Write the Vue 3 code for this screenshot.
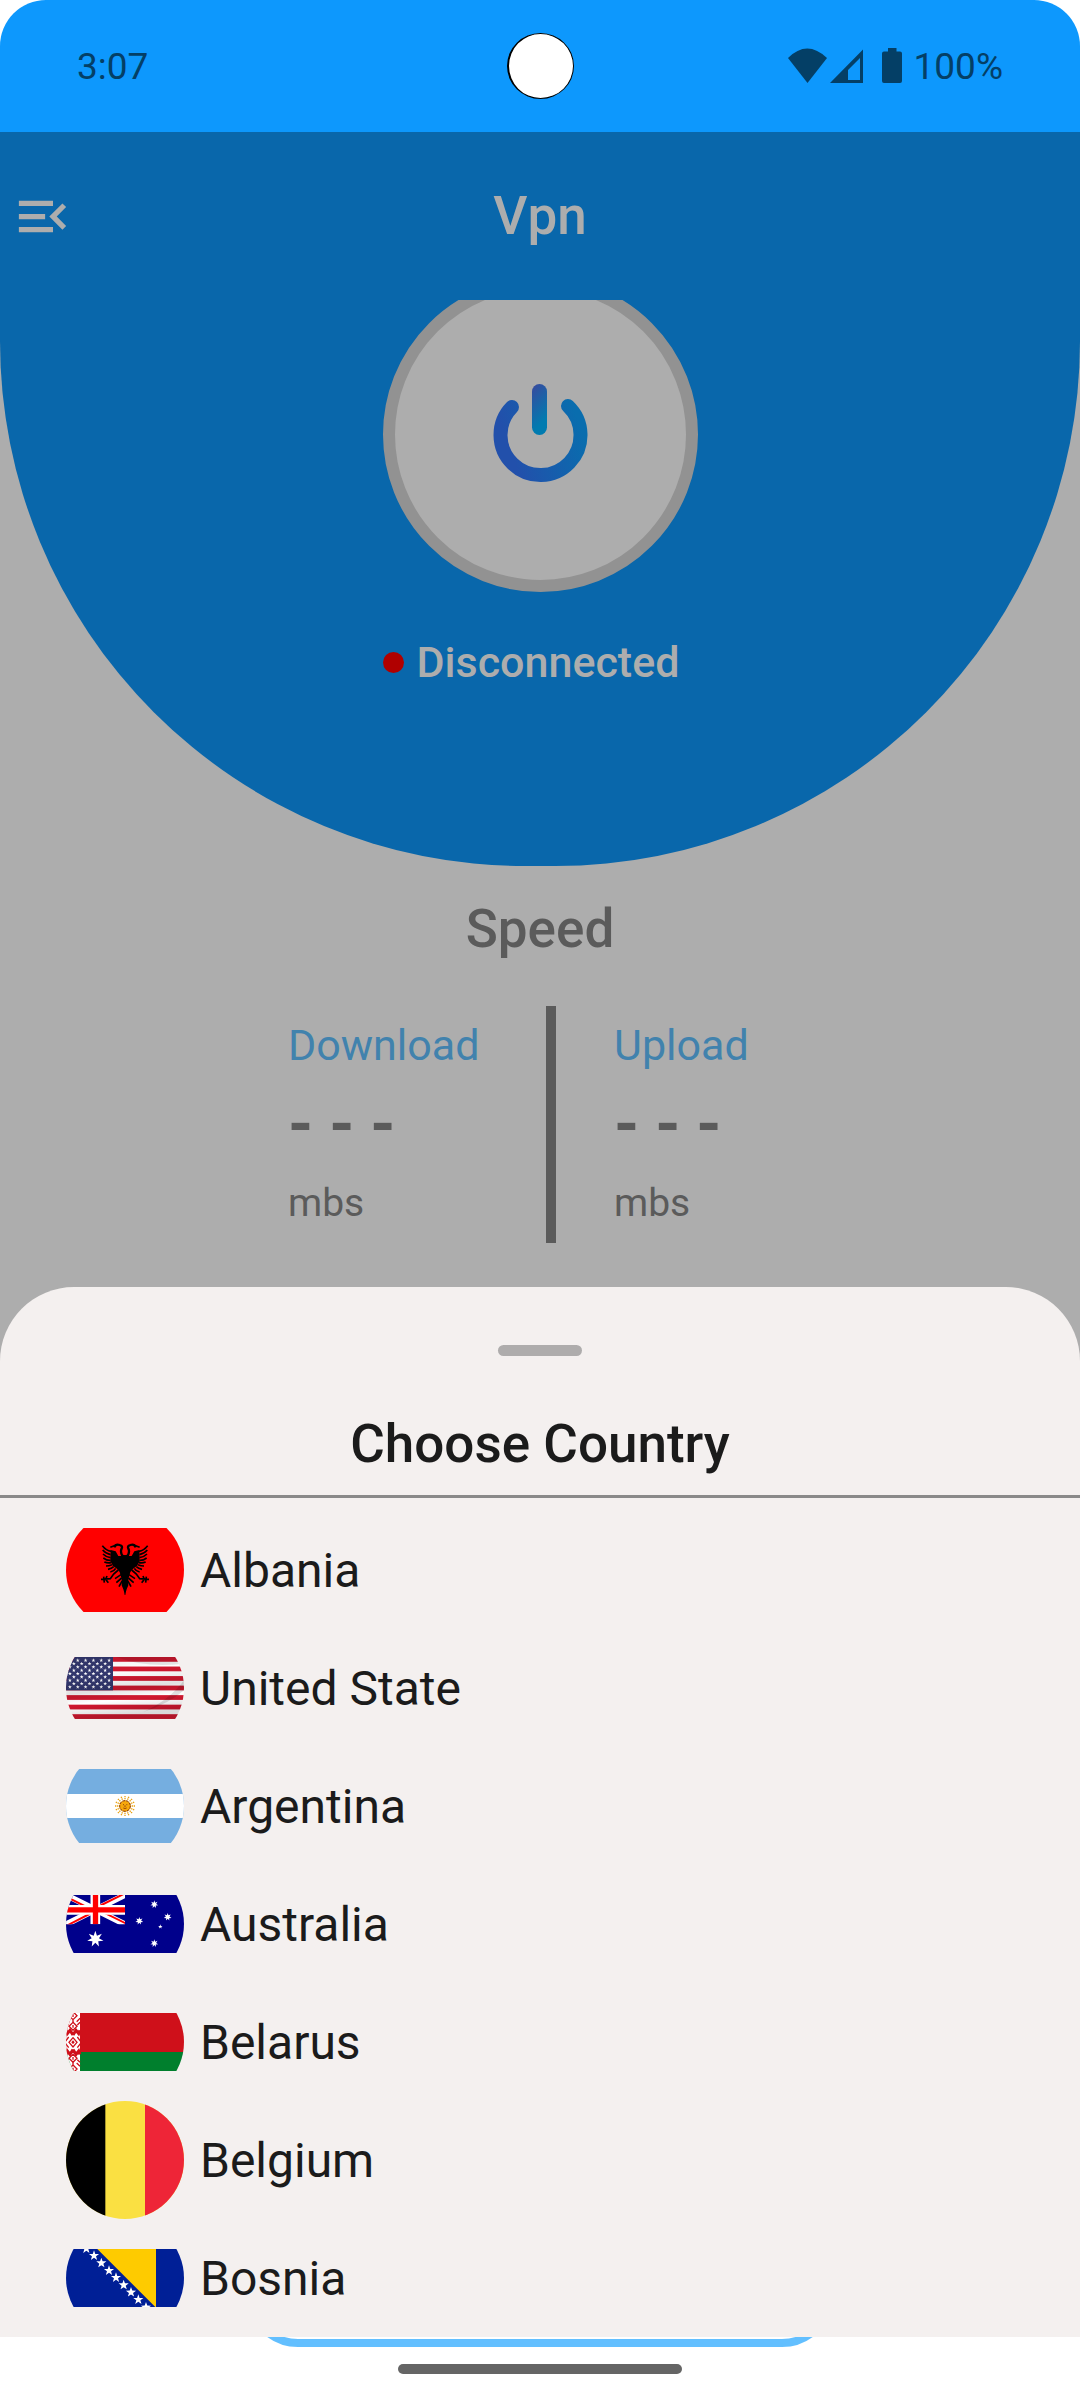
<script setup>
const countries = [
  { code: 'al', name: 'Albania' },
  { code: 'us', name: 'United State' },
  { code: 'ar', name: 'Argentina' },
  { code: 'au', name: 'Australia' },
  { code: 'by', name: 'Belarus' },
  { code: 'be', name: 'Belgium' },
  { code: 'ba', name: 'Bosnia' },
]

const speeds = [
  { label: 'Download', value: '- - -', unit: 'mbs' },
  { label: 'Upload', value: '- - -', unit: 'mbs' },
]

function star(cx, cy, r, points = 5, ratio = 0.4) {
  const out = []
  for (let i = 0; i < points * 2; i++) {
    const d = i % 2 ? r * ratio : r
    const a = (Math.PI * i) / points - Math.PI / 2
    out.push(`${(cx + d * Math.cos(a)).toFixed(1)},${(cy + d * Math.sin(a)).toFixed(1)}`)
  }
  return out.join(' ')
}

const usStars = []
for (let row = 0; row < 9; row++) {
  const count = row % 2 ? 5 : 6
  for (let i = 0; i < count; i++) {
    usStars.push(star(11.75 * (2 * i + 1 + (row % 2)), 10 * (row + 1), 6))
  }
}

const auStars = [
  star(88, 132, 25, 7, 0.45),
  star(265, 28, 12, 7, 0.45),
  star(220, 78, 12, 7, 0.45),
  star(305, 66, 12, 7, 0.45),
  star(283, 95, 7),
  star(265, 145, 12, 7, 0.45),
]

const baStars = [
  [61, -1], [84, 20], [106, 42], [129, 65], [150, 86],
  [173, 108], [195, 130], [217, 152], [240, 175],
].map(([x, y]) => star(x, y, 16))

const sunRays = Array.from({ length: 16 }, (_, i) => i * 22.5)
</script>

<template>
  <div class="screen">
    <header class="status">
      <time class="clock">3:07</time>
      <span class="camera"></span>
      <div class="indicators">
        <svg class="signals" viewBox="0 0 76 36" aria-hidden="true">
          <path d="M0 10Q19-9 39 10L19.500 35Z" />
          <path fill-rule="evenodd" d="M42 35L75 1.500V35ZM60 32H72V10L60 22Z" />
        </svg>
        <svg class="battery" viewBox="0 0 20 36" aria-hidden="true">
          <path d="M6 0h8.500v3.500H18a2 2 0 0 1 2 2V33a2 2 0 0 1-2 2H2a2 2 0 0 1-2-2V5.500a2 2 0 0 1 2-2h4z" />
        </svg>
        <span>100%</span>
      </div>
    </header>

    <div class="stage">
      <main class="home">
        <section class="hero">
          <div class="appbar">
            <button class="menu" type="button" aria-label="Menu">
              <svg viewBox="0 0 24 24">
                <path d="M3 18h13v-2H3v2zM3 13h10v-2H3v2zm0-7v2h13V6H3zm18 9.590L17.420 12 21 8.410 19.590 7l-5 5 5 5L21 15.590z" />
              </svg>
            </button>
            <h1>Vpn</h1>
          </div>
          <div class="power-wrap">
            <button class="power" type="button" aria-label="Connect">
              <svg viewBox="0 0 100 100">
                <defs>
                  <linearGradient id="ring" x1="0" y1="0.6" x2="1" y2="0.3">
                    <stop offset="0.1" stop-color="#2250ab" />
                    <stop offset="1" stop-color="#096dae" />
                  </linearGradient>
                  <linearGradient id="stem" x1="0.3" y1="0" x2="0.6" y2="1">
                    <stop offset="0" stop-color="#344d9f" />
                    <stop offset="0.8" stop-color="#007bb0" />
                  </linearGradient>
                </defs>
                <path d="M22 22A40 40 0 1 0 78 21" fill="none" stroke="url(#ring)" stroke-width="14" stroke-linecap="round" />
                <rect x="42" y="-1" width="15" height="51" rx="7.500" fill="url(#stem)" />
              </svg>
            </button>
          </div>
          <p class="connection"><span class="dot"></span>Disconnected</p>
        </section>

        <section class="speed">
          <h2>Speed</h2>
          <div class="meters">
            <dl v-for="s in speeds" :key="s.label" class="meter">
              <dt>{{ s.label }}</dt>
              <dd class="value">{{ s.value }}</dd>
              <dd class="unit">{{ s.unit }}</dd>
            </dl>
          </div>
        </section>
      </main>

      <section class="sheet" aria-labelledby="sheet-title">
        <span class="handle"></span>
        <h2 id="sheet-title">Choose Country</h2>
        <ul>
          <li v-for="c in countries" :key="c.code">
            <button class="country" type="button">
              <span class="flag">
                <svg v-if="c.code === 'al'" viewBox="0 0 354 252">
                  <rect width="354" height="252" fill="#f00" />
                  <defs>
                    <g id="eagle">
                      <path d="M-1 82L6 80 12 84 20 84 28 70 43 66 44 100 36 114 24 122 16 132 12 146 9 158 10 172 5 184 0 201-1 201Z" />
                      <g fill="none" stroke="#000" stroke-width="5">
                        <path d="M8 84Q15 70 10 62 6 54 16 51 28 47 32 58" stroke-width="7" />
                        <path d="M26 51L44 58M42 70Q56 68 68 53M43 80Q56 78 67 66M43 89Q56 88 66 78M43 97Q54 98 65 90M42 104Q52 106 62 102M39 110Q48 114 57 114M34 116Q40 122 51 124M28 121Q33 130 44 132" />
                        <path d="M20 126L34 138 44 152 72 154M54 144L58 154 50 164M64 146L62 164M12 140L30 152M10 150L26 164M8 158L18 176" />
                      </g>
                    </g>
                  </defs>
                  <use href="#eagle" transform="translate(177 0)" />
                  <use href="#eagle" transform="translate(177 0) scale(-1 1)" />
                </svg>

                <svg v-else-if="c.code === 'us'" viewBox="0 0 354 186">
                  <defs>
                    <linearGradient id="wave" x1="0" y1="0" x2="0.2" y2="1">
                      <stop offset="0" stop-opacity="0.1" />
                      <stop offset="0.3" stop-opacity="0" />
                      <stop offset="0.58" stop-opacity="0.12" />
                      <stop offset="0.75" stop-opacity="0" />
                      <stop offset="1" stop-opacity="0.15" />
                    </linearGradient>
                  </defs>
                  <rect width="354" height="186" fill="#fff" />
                  <rect v-for="n in 7" :key="n" :y="(n - 1) * 28.6" width="354" height="14.300" fill="#d0182f" />
                  <rect width="141" height="100" fill="#33386f" />
                  <polygon v-for="(p, i) in usStars" :key="i" :points="p" fill="#fff" />
                  <path d="M354 70Q310 130 230 166 310 140 354 100Z" opacity="0.12" />
                  <path d="M150 0Q240 34 354 20V0Z" opacity="0.1" />
                  <rect width="354" height="186" fill="url(#wave)" />
                </svg>

                <svg v-else-if="c.code === 'ar'" viewBox="0 0 354 222">
                  <rect width="354" height="222" fill="#75aee0" />
                  <rect y="75" width="354" height="72" fill="#fff" />
                  <g transform="translate(177 111)">
                    <path
                      v-for="a in sunRays"
                      :key="a"
                      d="M0-14V-30"
                      :transform="`rotate(${a})`"
                      stroke="#e9a214"
                      stroke-width="4"
                      stroke-dasharray="4 2"
                    />
                    <circle r="16" fill="#f6a80c" stroke="#85340a" stroke-width="3" stroke-dasharray="8 3" />
                    <path d="M-6-4h3M4-4h3M0-2v5M-5 6Q0 9 5 6" fill="none" stroke="#85340a" stroke-width="2.500" />
                  </g>
                </svg>

                <svg v-else-if="c.code === 'au'" viewBox="0 0 354 176">
                  <defs>
                    <clipPath id="jack"><rect width="177" height="88" /></clipPath>
                  </defs>
                  <rect width="354" height="176" fill="#00008b" />
                  <g clip-path="url(#jack)">
                    <path d="M0 0L177 88M0 88L177 0" stroke="#fff" stroke-width="18" />
                    <path d="M-2 4L88 49M0 93L88 48M88 39L177-5M88 40L179 85" stroke="#f00" stroke-width="6" />
                    <path d="M88 0V88M0 44.500H177" stroke="#fff" stroke-width="29" />
                    <path d="M88.500 0V88M0 44.500H177" stroke="#f00" stroke-width="16" />
                  </g>
                  <polygon v-for="(p, i) in auStars" :key="i" :points="p" fill="#fff" />
                </svg>

                <svg v-else-if="c.code === 'by'" viewBox="0 0 354 176">
                  <defs>
                    <g id="ornament" fill="none" stroke="#cf101a" stroke-width="4">
                      <path d="M21 74L33 88 21 102 9 88Z" />
                      <path d="M21 82L26 88 21 94 16 88Z" fill="#cf101a" stroke="none" />
                      <path d="M-4 88L8 72M-4 88L8 104M46 88L34 72M46 88L34 104" />
                      <path d="M21 66L12 52 4 62 0 52M21 66L30 52 38 62 42 52" stroke-width="9" />
                      <path d="M21 110L12 124 4 114 0 124M21 110L30 124 38 114 42 124" stroke-width="9" />
                      <path d="M21 28L33 40 21 52 9 40ZM21 36V44M0 28L8 36M42 28L34 36" />
                      <path d="M21 124L33 136 21 148 9 136ZM21 132V140M0 148L8 140M42 148L34 140" />
                      <path d="M21-4L33 8 21 20 9 8ZM21 4V12M0 16L10 26M42 16L32 26M21 20V28" />
                      <path d="M21 156L33 168 21 180 9 168ZM21 164V172M0 160L10 150M42 160L32 150M21 148V156" />
                    </g>
                  </defs>
                  <rect width="354" height="117" fill="#cf101a" />
                  <rect y="117" width="354" height="59" fill="#007f2d" />
                  <rect width="42" height="176" fill="#fff" />
                  <use href="#ornament" />
                </svg>

                <svg v-else-if="c.code === 'be'" viewBox="0 0 354 354">
                  <rect width="354" height="354" fill="#fae042" />
                  <rect width="118" height="354" fill="#000" />
                  <rect x="237" width="117" height="354" fill="#ee2537" />
                </svg>

                <svg v-else viewBox="0 0 354 176">
                  <rect width="354" height="176" fill="#001f96" />
                  <path d="M94 0H270V176Z" fill="#fecb00" />
                  <polygon v-for="(p, i) in baStars" :key="i" :points="p" fill="#fff" />
                </svg>
              </span>
              {{ c.name }}
            </button>
          </li>
        </ul>
      </section>
    </div>

    <footer class="nav">
      <button class="location" type="button" aria-label="Location"></button>
      <span class="home-bar"></span>
    </footer>
  </div>
</template>

<style>
body {
  margin: 0;
  background: #fff;
}
</style>

<style scoped>
.screen {
  display: flex;
  flex-direction: column;
  min-height: 100vh;
  overflow: hidden;
  font-family: Roboto, "Liberation Sans", sans-serif;
  color: #1b1b1b;
}

h1,
h2,
p,
ul,
dl,
dd {
  margin: 0;
  padding: 0;
}

h1,
h2 {
  font-size: 53px;
  line-height: 64px;
  font-weight: 500;
}

button {
  padding: 0;
  border: 0;
  background: none;
  font: inherit;
  color: inherit;
}

svg {
  display: block;
}

.status {
  display: grid;
  grid-template-columns: 1fr auto 1fr;
  align-items: center;
  height: 132px;
  padding: 0 77px;
  box-sizing: border-box;
  border-radius: 46px 46px 0 0;
  background: #0d98fd;
  color: #043f66;
  font-size: 37px;
}

.camera {
  width: 64px;
  height: 64px;
  border: 1px solid #000;
  border-left-width: 2px;
  border-radius: 50%;
  background: #fff;
}

.indicators {
  display: flex;
  justify-content: flex-end;
  align-items: center;
  gap: 12px;
}

.indicators svg {
  height: 36px;
  fill: currentColor;
}

.signals {
  width: 76px;
  margin-right: 6px;
}

.battery {
  width: 20px;
}

.stage {
  position: relative;
  flex: 1;
  background: #adadad;
}

.hero {
  height: 734px;
  border-radius: 0 0 525px 525px;
  background: #0967ab;
  color: #adadad;
}

.appbar {
  display: grid;
  grid-template-columns: 63px 1fr 63px;
  align-items: center;
  height: 168px;
  padding: 0 11px;
  text-align: center;
}

.menu svg {
  width: 63px;
  height: 63px;
  fill: currentColor;
}

.power-wrap {
  display: flex;
  justify-content: center;
  align-items: flex-end;
  height: 292px;
  overflow: hidden;
}

.power {
  display: grid;
  place-items: center;
  flex: none;
  width: 315px;
  height: 315px;
  box-sizing: border-box;
  border: 12px solid #929292;
  border-radius: 50%;
  background: #adadad;
}

.power svg {
  width: 100px;
  height: 100px;
  overflow: visible;
}

.connection {
  display: flex;
  align-items: center;
  gap: 13px;
  width: 315px;
  margin: 45px auto 0;
  font-size: 43px;
  line-height: 50px;
  font-weight: 500;
}

.dot {
  width: 21px;
  height: 21px;
  border-radius: 50%;
  background: #b00000;
}

.speed {
  padding-top: 31px;
  color: #5b5b5b;
  text-align: center;
}

.meters {
  display: flex;
  justify-content: center;
  margin-top: 45px;
  text-align: left;
}

.meter {
  width: 178px;
  font-size: 39px;
  line-height: 79px;
}

.meter:first-child {
  width: 258px;
}

.meter + .meter {
  padding-left: 58px;
  border-left: 10px solid #5b5b5b;
}

.meter dt {
  font-size: 43px;
  color: #4182ad;
}

.value {
  font-size: 64px;
  font-weight: 700;
}

.sheet {
  position: absolute;
  left: 0;
  right: 0;
  bottom: 0;
  border-radius: 74px 74px 0 0;
  background: #f4f0ef;
}

.handle {
  display: block;
  width: 84px;
  height: 11px;
  margin: 58px auto 56px;
  border-radius: 6px;
  background: #aeacac;
}

.sheet h2 {
  padding-bottom: 19px;
  border-bottom: 3px solid #8a8989;
  text-align: center;
}

.sheet ul {
  padding-top: 13px;
  list-style: none;
}

.country {
  display: flex;
  align-items: center;
  gap: 16px;
  width: 100%;
  height: 118px;
  padding-left: 66px;
  font-size: 48px;
}

.flag {
  display: grid;
  align-items: center;
  width: 118px;
  height: 118px;
  border-radius: 50%;
  overflow: hidden;
}

.flag svg {
  width: 118px;
}

.nav {
  position: relative;
  display: flex;
  justify-content: center;
  align-items: center;
  height: 63px;
  overflow: hidden;
  background: #fff;
}

.location {
  position: absolute;
  bottom: 53px;
  left: 50%;
  width: 588px;
  height: 158px;
  margin-left: -294px;
  border: 8px solid #62bfff;
  border-radius: 52px;
}

.home-bar {
  width: 284px;
  height: 10px;
  border-radius: 5px;
  background: #656565;
}
</style>
